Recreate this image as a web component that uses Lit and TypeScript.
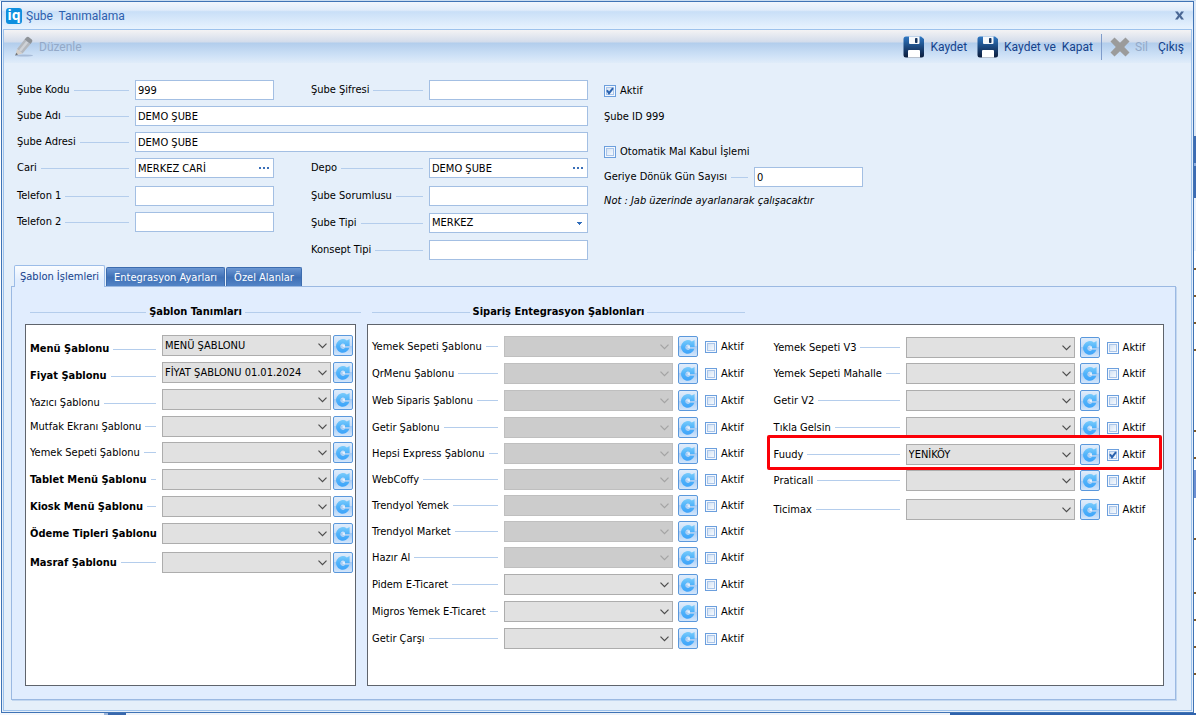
import { LitElement, html, css, unsafeCSS, nothing } from "lit";
import { customElement, property } from "lit/decorators.js";

type Spacing = "tight" | "normal" | "loose";

interface TemplateRow {
  label: string;
  value?: string;
  bold?: boolean;
  low?: boolean;
  disabled?: boolean;
  checked?: boolean;
  marked?: boolean;
  after?: Spacing;
}

const TEMPLATES: TemplateRow[] = [
  { label: "Menü Şablonu", value: "MENÜ ŞABLONU", bold: true, low: true },
  { label: "Fiyat Şablonu", value: "FİYAT ŞABLONU 01.01.2024", bold: true, low: true },
  { label: "Yazıcı Şablonu", low: true },
  { label: "Mutfak Ekranı Şablonu", after: "tight" },
  { label: "Yemek Sepeti Şablonu" },
  { label: "Tablet Menü Şablonu", bold: true },
  { label: "Kiosk Menü Şablonu", bold: true },
  { label: "Ödeme Tipleri Şablonu", bold: true, after: "loose" },
  { label: "Masraf Şablonu", bold: true },
];

const ORDERS: TemplateRow[] = [
  { label: "Yemek Sepeti Şablonu", disabled: true },
  { label: "QrMenu Şablonu", disabled: true },
  { label: "Web Siparis Şablonu", disabled: true },
  { label: "Getir Şablonu", disabled: true, after: "tight" },
  { label: "Hepsi Express Şablonu", disabled: true, after: "tight" },
  { label: "WebCoffy", disabled: true, after: "tight" },
  { label: "Trendyol Yemek", disabled: true, after: "tight" },
  { label: "Trendyol Market", disabled: true, after: "tight" },
  { label: "Hazır Al", disabled: true },
  { label: "Pidem E-Ticaret" },
  { label: "Migros Yemek E-Ticaret" },
  { label: "Getir Çarşı" },
];

const ORDERS_MORE: TemplateRow[] = [
  { label: "Yemek Sepeti V3", after: "tight" },
  { label: "Yemek Sepeti Mahalle" },
  { label: "Getir V2" },
  { label: "Tıkla Gelsin" },
  { label: "Fuudy", value: "YENİKÖY", checked: true, marked: true, after: "tight" },
  { label: "Praticall", after: "loose" },
  { label: "Ticimax" },
];

// Row markers of the grid that shows behind the window's right edge.
const TICKS = [268, 295, 322, 349, 430, 457, 538, 592, 619, 646, 673];
const tickStops = unsafeCSS(
  TICKS.map((y) => `transparent ${y}px, #7d5a2c ${y}px ${y + 2}px, transparent ${y + 2}px`).join(", "),
);

const controls = css`
  :host,
  * {
    box-sizing: border-box;
  }
  input,
  select,
  button {
    font: inherit;
    color: inherit;
    margin: 0;
    border-radius: 0;
  }
  .caption {
    display: flex;
    align-items: center;
    gap: 4px;
    white-space: nowrap;
    line-height: 14px;
  }
  .caption::after {
    content: "";
    flex: 1;
    height: 1px;
    background: #b4cdec;
  }
`;

@customElement("check-box")
class CheckBox extends LitElement {
  @property() label = "";
  @property({ type: Boolean }) checked = false;

  static styles = [
    controls,
    css`
      :host {
        display: block;
      }
      .check {
        display: flex;
        align-items: center;
        gap: 4px;
        line-height: 14px;
        white-space: nowrap;
      }
      .box {
        display: grid;
        width: 12px;
        height: 12px;
      }
      .box > * {
        grid-area: 1 / 1;
      }
      .tick {
        appearance: none;
        width: 12px;
        height: 12px;
        border: 1px solid #6c9fdd;
        background: linear-gradient(135deg, #cfdff2, #fbfdff) content-box,
          #fff;
        padding: 1px;
        box-shadow: inset 0 0 0 1px #f4f8fd, inset 0 0 0 2px #a9c5ea;
      }
      .mark {
        width: 12px;
        height: 12px;
        pointer-events: none;
      }
    `,
  ];

  render() {
    return html`<label class="check">
      <span class="box">
        <input class="tick" type="checkbox" .checked=${this.checked} />
        ${this.checked
          ? html`<svg class="mark" viewBox="0 0 12 12">
              <path d="M3 5.2 5 8.2 9 3.2" fill="none" stroke="#2a62ae" stroke-width="2" />
            </svg>`
          : nothing}
      </span>
      <span>${this.label}</span>
    </label>`;
  }
}

@customElement("template-row")
class TemplateRowElement extends LitElement {
  @property({ attribute: false }) row: TemplateRow = { label: "" };
  @property({ type: Boolean }) toggle = false;

  static styles = [
    controls,
    css`
      :host {
        display: block;
      }
      .row {
        display: flex;
        align-items: center;
        height: 21px;
        position: relative;
      }
      .caption {
        width: 126px;
        margin-right: 6px;
      }
      .low {
        align-self: flex-end;
      }
      .bold {
        font-weight: bold;
      }
      .combo {
        display: grid;
        width: 169px;
        height: 21px;
      }
      .combo > * {
        grid-area: 1 / 1;
      }
      .select {
        appearance: none;
        width: 100%;
        height: 21px;
        border: 1px solid #adadad;
        background: #e1e1e1;
        padding: 0 2px;
        color: #000;
        opacity: 1;
      }
      .select:disabled {
        background: #cccccc;
        border-color: #bfbfbf;
      }
      .arrow {
        width: 9px;
        height: 6px;
        align-self: center;
        justify-self: end;
        margin-right: 4px;
        pointer-events: none;
        color: #4c4c4c;
      }
      .select:disabled + .arrow {
        color: #a3a3a3;
      }
      .refresh {
        width: 20px;
        height: 21px;
        margin-left: 2px;
        padding: 0;
        border: 1px solid #5a98dc;
        border-radius: 2px;
        background: linear-gradient(#e0edfb, #c6dcf7 50%, #a5caf3 50%, #d3e6fb);
        display: grid;
        place-items: center;
      }
      .refresh svg {
        width: 18px;
        height: 18px;
      }
      .toggle .refresh {
        margin: 0 7px 0 5px;
      }
      .marker {
        position: absolute;
        inset: -9px -17px -5px -7px;
        border: 3px solid #fb0007;
        border-radius: 2px;
        pointer-events: none;
      }
    `,
  ];

  render() {
    const { label, value, bold, low, disabled, checked, marked } = this.row;
    return html`<div class="row ${this.toggle ? "toggle" : ""}">
      <label class="caption ${bold ? "bold" : ""} ${low ? "low" : ""}" for="pick">${label}</label>
      <span class="combo">
        <select class="select" id="pick" ?disabled=${disabled}>
          <option>${value ?? ""}</option>
        </select>
        <svg class="arrow" viewBox="0 0 9 6">
          <path d="M.5.7 4.5 4.7 8.5.7" fill="none" stroke="currentColor" stroke-width="1.2" />
        </svg>
      </span>
      <button class="refresh" type="button" aria-label="Yenile">
        <svg viewBox="0 0 18 18">
          <defs>
            <linearGradient id="g" x1="0" y1="0" x2="0" y2="1">
              <stop offset="0" stop-color="#78cbfc" />
              <stop offset="0.5" stop-color="#4fb2fa" />
              <stop offset="1" stop-color="#3fa4fa" />
            </linearGradient>
          </defs>
          <path
            d="M15.600 2V9H10.800V7.400A2.600 2.600 0 1 0 11 10.800H15.400A6.800 6.800 0 1 1 12.800 3.400Z"
            fill="url(#g)"
          />
          <path d="M8 9.100 10.800 7.600V10.600Z" fill="#eaf6ff" />
        </svg>
      </button>
      ${this.toggle
        ? html`<check-box label="Aktif" ?checked=${checked}></check-box>`
        : nothing}
      ${marked ? html`<span class="marker"></span>` : nothing}
    </div>`;
  }
}

@customElement("app-root")
class AppRoot extends LitElement {
  static styles = [
    controls,
    css`
      :host {
        display: flex;
        min-height: 100vh;
        padding: 1px 2px 2px 1px;
        font: 11px/14px "DejaVu Sans Condensed", "DejaVu Sans", sans-serif;
        color: #000;
        background: linear-gradient(90deg, #f4f6fa 104px, #9db6da 104px 108px, #3a68ac 108px 126px, #eef2f8 126px 950px, #2f63ad 950px)
            bottom / 100% 2px no-repeat,
          linear-gradient(#c9dcf0, #c9dcf0) top / 100% 1px no-repeat,
          linear-gradient(${tickStops}) right / 2px 100% no-repeat,
          linear-gradient(
              #dce8f6 136px,
              #3d6cb3 136px 163px,
              #8eaee0 163px 166px,
              #3d6cb3 166px 198px,
              #eaf1fb 198px 251px,
              #fff 251px 470px,
              #6c8fd2 470px 498px,
              #fff 498px
            )
            right / 2px 100% no-repeat,
          #fff;
      }
      .window {
        flex: 1;
        display: flex;
        flex-direction: column;
        border: 1px solid #3f73b5;
        padding: 0 1px 1px;
        background: #e5effa;
      }
      .titlebar {
        display: flex;
        align-items: center;
        gap: 4px;
        height: 27px;
        margin: 0 -1px;
        padding: 0 8px 0 4px;
        background: linear-gradient(#f1f6fd, #e0ecfa 30%, #c9dff7 36%, #e8f3fe);
        color: #2d5fae;
        font: 12px/16px Roboto, sans-serif;
      }
      .logo {
        width: 16px;
        height: 16px;
        border-radius: 3px;
        background: #0e8fdf;
        color: #fff;
        font: bold 14px/14px "Noto Sans", sans-serif;
        text-align: center;
      }
      .title {
        flex: 1;
        margin: 0;
        font: inherit;
        white-space: pre;
      }
      .close {
        width: 11px;
        height: 11px;
        padding: 0;
        border: 0;
        background: none;
        display: grid;
      }
      .frame {
        flex: 1;
        display: flex;
        flex-direction: column;
        border: 1px solid #9dc2ec;
        padding: 0 15px 10px 7px;
      }
      .toolbar {
        display: flex;
        align-items: center;
        height: 33px;
        margin: 0 -15px 0 -7px;
        padding: 0 7px 0 10px;
        background: linear-gradient(#f4f3f4, #d3dceb 12px, #b2cdec 13px, #cfe2f7 26px, #e0ecf9);
        color: #15428b;
        font: 12px/16px Roboto, sans-serif;
      }
      .tool {
        display: flex;
        align-items: center;
        gap: 5px;
        height: 26px;
        padding: 0;
        border: 0;
        background: none;
        white-space: pre;
      }
      .tool:disabled {
        color: #93a9c8;
      }
      .spacer {
        flex: 1;
      }
      .tools {
        display: flex;
        align-items: center;
        gap: 10px;
      }
      .rule {
        width: 1px;
        height: 26px;
        background: #7f9ccb;
        margin: 0 -2px;
      }
      .form {
        display: flex;
        align-items: flex-start;
        gap: 16px;
        padding: 17px 0 0 6px;
      }
      .entry {
        display: grid;
        grid-template-columns: 257px 37px 1fr;
        row-gap: 6px;
        width: 571px;
      }
      .pair {
        display: grid;
        grid-template-columns: 112px 1fr;
        column-gap: 6px;
        align-items: center;
      }
      .wide {
        grid-column: 1 / -1;
      }
      .right {
        grid-column: 3;
      }
      .stack {
        display: flex;
        flex-direction: column;
        gap: 6px;
      }
      .right.stack {
        gap: 7px;
      }
      .lower {
        padding-top: 2px;
      }
      .field {
        display: flex;
        align-items: center;
        height: 20px;
        border: 1px solid #a3bfe3;
        background: #fff;
      }
      .input {
        flex: 1;
        min-width: 0;
        width: 100%;
        height: 18px;
        border: 0;
        padding: 0 2px;
        background: none;
        appearance: none;
        outline: none;
      }
      .more,
      .drop {
        flex: none;
        width: 18px;
        height: 18px;
        padding: 0;
        border: 0;
        background: none;
        display: grid;
        place-items: center;
      }
      .drop {
        width: 16px;
      }
      .side {
        display: flex;
        flex-direction: column;
        align-items: flex-start;
        padding-top: 4px;
      }
      .ident {
        margin: 12px 0 21px;
      }
      .days {
        display: grid;
        grid-template-columns: 144px 109px;
        column-gap: 6px;
        align-items: center;
        margin-top: 8px;
      }
      .note {
        margin: 7px 0 0;
        font-style: italic;
      }
      .tabs {
        display: flex;
        align-items: flex-end;
        gap: 1px;
        margin: 5px 0 -1px 3px;
      }
      .tab {
        height: 20px;
        padding: 0 7px;
        border: 1px solid #3d6cae;
        border-bottom: 0;
        border-radius: 2px 2px 0 0;
        background: linear-gradient(#6c97d3, #3f70b6 50%, #5586c8);
        color: #fff;
        white-space: nowrap;
      }
      .tab.active {
        height: 22px;
        padding: 0 5px;
        border-color: #9bbce8;
        background: linear-gradient(#fbfdff, #e1edfe 70%);
        color: #15428b;
        z-index: 1;
      }
      .panel {
        flex: 1;
        display: flex;
        gap: 11px;
        padding: 18px 11px 13px 13px;
        border: 1px solid #9bb9e2;
        background: #e1edfe;
        box-shadow: 1px 1px 0 #c3d7f0;
      }
      .group {
        display: flex;
        flex-direction: column;
        gap: 5px;
      }
      .first {
        width: 331px;
      }
      .rest {
        flex: 1;
      }
      .heading {
        display: flex;
        align-items: center;
        gap: 3px;
        margin: 0 -5px 0 5px;
        font: inherit;
        font-weight: bold;
        white-space: nowrap;
      }
      .heading::before,
      .heading::after {
        content: "";
        flex: 1;
        height: 1px;
        background: #b4cdec;
      }
      .rest .heading {
        width: 373px;
      }
      .card {
        flex: 1;
        border: 1px solid #5f646c;
        background: #fff;
        padding: 10px 4px;
      }
      .first .card {
        padding-right: 2px;
      }
      .cols {
        display: flex;
        gap: 30px;
        padding: 11px 4px;
      }
      .list {
        display: flex;
        flex-direction: column;
      }
      .list + .list {
        padding-top: 1px;
      }
      .normal {
        margin-bottom: 6px;
      }
      .tight {
        margin-bottom: 5px;
      }
      .loose {
        margin-bottom: 8px;
      }
    `,
  ];

  private floppy() {
    return html`<svg width="22" height="22" viewBox="0 0 22 22" aria-hidden="true">
      <defs>
        <linearGradient id="disk" x1="0" y1="0" x2="0" y2="1">
          <stop offset="0" stop-color="#2f78c4" />
          <stop offset="0.55" stop-color="#1a4377" />
          <stop offset="1" stop-color="#0c1d3c" />
        </linearGradient>
      </defs>
      <path d="M3 .5H18L21 3V19Q21 21.500 18.500 21.500H3Q.5 21.500 .5 19V3Q.5.5 3 .5Z" fill="url(#disk)" />
      <path d="M6 .5H16.500V7Q16.500 8 15.500 8H7Q6 8 6 7Z" fill="#f6f8fb" />
      <rect x="12" y="2" width="2.500" height="5" rx=".8" fill="#17355f" />
      <path d="M5 21.500V15Q5 14 6 14H16Q17 14 17 15V21.500Z" fill="#fff" />
    </svg>`;
  }

  private text(id: string, label: string, value = "", more = false) {
    return html`<div class="pair">
      <label class="caption" for=${id}>${label}</label>
      <span class="field">
        <input class="input" id=${id} type="text" .value=${value} />
        ${more
          ? html`<button class="more" type="button" aria-label="Seç">
              <svg width="11" height="2" viewBox="0 0 11 2">
                <path d="M0 0h2v2H0zM4 0h2v2H4zM8 0h2v2H8z" fill="#3a6fb8" />
              </svg>
            </button>`
          : nothing}
      </span>
    </div>`;
  }

  private rows(rows: TemplateRow[], toggle: boolean) {
    return html`<div class="list">
      ${rows.map(
        (row) => html`<template-row
          class=${row.after ?? "normal"}
          .row=${row}
          ?toggle=${toggle}
        ></template-row>`,
      )}
    </div>`;
  }

  render() {
    return html`<main class="window">
      <header class="titlebar">
        <span class="logo">iq</span>
        <h1 class="title">Şube  Tanımalama</h1>
        <button class="close" type="button" aria-label="Kapat">
          <svg width="11" height="11" viewBox="0 0 11 11">
            <path d="M1 1.500H3.800L5.500 4 7.200 1.500H10L7 5.500 10 9.500H7.200L5.500 7 3.800 9.500H1L4 5.500Z" fill="#4a6794" />
          </svg>
        </button>
      </header>
      <div class="frame">
        <nav class="toolbar">
          <button class="tool" type="button" disabled>
            <svg width="20" height="21" viewBox="0 0 20 21">
              <ellipse cx="10" cy="19.500" rx="9" ry="1" fill="#a8bcd8" />
              <path d="M3 13 10.500 3.500 16.500 8 8.500 17.500Z" fill="#b4b8be" />
              <path d="M5 14.300 12.300 5 14.300 6.500 6.900 15.800Z" fill="#cfd2d7" />
              <path d="M10.500 3.500 12.500 1.200Q13.500 .2 14.600 1L17.800 3.400Q18.900 4.400 18 5.900L16.500 8Z" fill="#8f9398" />
              <path d="M3 13 8.500 17.500 1.500 19.300Z" fill="#d5cfc8" />
              <path d="M2.200 16.800 4 18.400 1.200 19.500Z" fill="#6e7278" />
            </svg>
            <span>Düzenle</span>
          </button>
          <span class="spacer"></span>
          <div class="tools">
            <button class="tool" type="button">${this.floppy()}<span>Kaydet</span></button>
            <button class="tool" type="button">${this.floppy()}<span>Kaydet ve  Kapat</span></button>
            <span class="rule"></span>
            <button class="tool" type="button" disabled>
              <svg width="20" height="20" viewBox="0 0 20 20">
                <path
                  d="M.5 4.500 4.500 .5 10 5.800 15.500 .5 19.500 4.500 14.200 10 19.500 15.500 15.500 19.500 10 14.200 4.500 19.500 .5 15.500 5.800 10Z"
                  fill="#9b9b9b"
                />
              </svg>
              <span>Sil</span>
            </button>
            <button class="tool" type="button">Çıkış</button>
          </div>
        </nav>
        <section class="form">
          <div class="entry">
            ${this.text("code", "Şube Kodu", "999")}
            <div class="right">${this.text("password", "Şube Şifresi")}</div>
            <div class="wide">${this.text("name", "Şube Adı", "DEMO ŞUBE")}</div>
            <div class="wide">${this.text("address", "Şube Adresi", "DEMO ŞUBE")}</div>
            ${this.text("account", "Cari", "MERKEZ CARİ", true)}
            <div class="right">${this.text("depot", "Depo", "DEMO ŞUBE", true)}</div>
            <div class="stack lower">
              ${this.text("phone1", "Telefon 1")} ${this.text("phone2", "Telefon 2")}
            </div>
            <div class="right stack lower">
              ${this.text("manager", "Şube Sorumlusu")}
              <div class="pair">
                <label class="caption" for="type">Şube Tipi</label>
                <span class="field">
                  <select class="input" id="type">
                    <option>MERKEZ</option>
                  </select>
                  <svg class="drop" viewBox="0 0 16 18">
                    <path d="M6 8h5v1h-1v1H9v1H8v-1H7v-1H6z" fill="#2f6cba" />
                  </svg>
                </span>
              </div>
              ${this.text("concept", "Konsept Tipi")}
            </div>
          </div>
          <div class="side">
            <check-box label="Aktif" checked></check-box>
            <span class="ident">Şube ID 999</span>
            <check-box label="Otomatik Mal Kabul İşlemi"></check-box>
            <div class="days">
              <label class="caption" for="days">Geriye Dönük Gün Sayısı</label>
              <span class="field"><input class="input" id="days" type="text" .value=${"0"} /></span>
            </div>
            <p class="note">Not : Jab üzerinde ayarlanarak çalışacaktır</p>
          </div>
        </section>
        <div class="tabs" role="tablist">
          <button class="tab active" role="tab" aria-selected="true">Şablon İşlemleri</button>
          <button class="tab" role="tab" aria-selected="false">Entegrasyon Ayarları</button>
          <button class="tab" role="tab" aria-selected="false">Özel Alanlar</button>
        </div>
        <section class="panel">
          <div class="group first">
            <h2 class="heading">Şablon Tanımları</h2>
            <div class="card">${this.rows(TEMPLATES, false)}</div>
          </div>
          <div class="group rest">
            <h2 class="heading">Sipariş Entegrasyon Şablonları</h2>
            <div class="card cols">${this.rows(ORDERS, true)} ${this.rows(ORDERS_MORE, true)}</div>
          </div>
        </section>
      </div>
    </main>`;
  }
}
